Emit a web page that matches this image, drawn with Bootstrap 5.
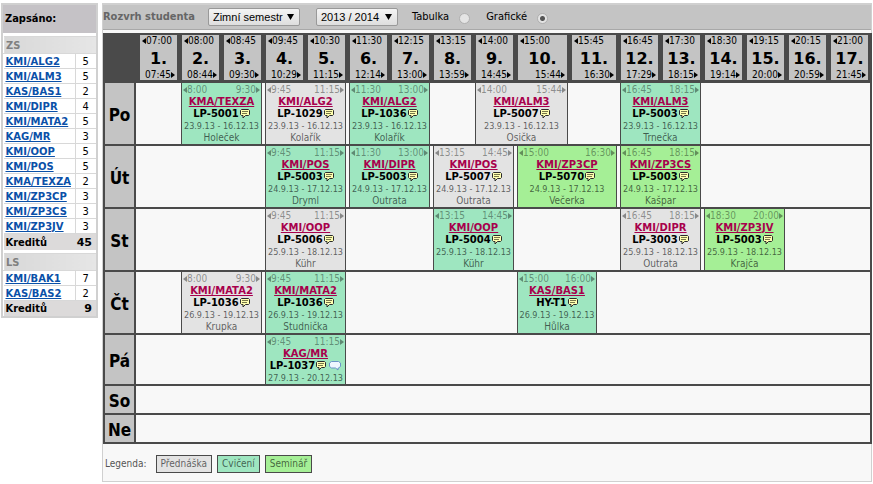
<!DOCTYPE html>
<html lang="cs">
<head>
<meta charset="utf-8">
<meta name="viewport" content="width=device-width, initial-scale=1">
<title>Rozvrh studenta</title>
<link href="https://cdn.jsdelivr.net/npm/bootstrap@5.3.0/dist/css/bootstrap.min.css" rel="stylesheet">
<style>
:root { --line: #4a4a4a; --head: #c4c4c4; --lecture: #e3e3e3; --exercise: #9ee6c0; --seminar: #a5ef96; }
body { font: 11px/12px "DejaVu Sans Condensed", "DejaVu Sans", sans-serif; color: #000; background: #fff; padding: 3px 1px 0 1px; }
.page-cols { gap: 4px; }

.enrolled { flex: 0 0 97px; border: 2px solid #d0d0d0; }
.enrolled h2 { font-size: 11px; line-height: 28px; font-weight: 700; margin: 0 0 3px; padding-left: 2px; background: #c5c2c6; }
.credits { width: 100%; border-top: 1px solid #d8d8d8; table-layout: fixed; }
.credits + .credits { margin-top: 3px; }
.credits col:last-child { width: 21px; }
.credits td, .credits th { padding: 1px 0 0 2px; height: 15px; line-height: 13px; border-bottom: 1px solid #d8d8d8; vertical-align: middle; }
.credits td + td { border-left: 1px solid #d8d8d8; padding: 1px 0 0; text-align: center; }
.credits thead th { height: 17px; color: #808080; background: linear-gradient(90deg, #d8d8d8, #e6e6e6); border-left: 1px solid #fff; padding-left: 2px; }
.credits tfoot th, .credits tfoot td { height: 16px; border: 0; background: #dcdada; font-weight: 700; }
.credits tfoot th + td { padding: 1px 4px 0 0; text-align: right; font-size: 11px; font-family: "DejaVu Sans", sans-serif; white-space: nowrap; }
.credits a { color: #0a50a8; font: 700 10px/13px "DejaVu Sans", sans-serif; text-decoration: underline; }

.schedule { border: 1px solid #d0d0d0; border-width: 2px 1px 1px; background: #f8f8f8; min-width: 0; }
.toolbar { height: 25px; background: var(--head); border-bottom: 1px solid #a8a8a8; margin-bottom: 3px; }
.toolbar h1 { font-size: 11px; line-height: 24px; font-weight: 700; color: #666; margin: 0 13px 0 0; }
.picker { appearance: none; height: 18px; width: 92px; margin-right: 16px; padding: 0 0 0 4px; border: 1px solid #999; border-radius: 2px; color: #000;
  font: 11px/14px "Liberation Sans", Arial, sans-serif;
  background: url("data:image/svg+xml,%3Csvg xmlns='http://www.w3.org/2000/svg' width='7' height='6'%3E%3Cpath d='M0 0h7L3.5 6z'/%3E%3C/svg%3E") no-repeat right 5px center, linear-gradient(#f4f4f4, #dedede); }
.picker-year { width: 82px; margin-right: 14px; }
.mode { appearance: none; width: 11px; height: 11px; margin: 2px 16px 0 10px; border: 1px solid #b0b0b0; border-radius: 50%; background: #e4e4e4; }
.mode:checked { background: radial-gradient(circle, #555 0 2px, #e4e4e4 3px); }

.timetable { width: 100%; table-layout: fixed; border: 2px solid var(--line); border-collapse: separate; border-spacing: 0; }
.timetable th, .timetable td { padding: 0; }
.timetable thead th { background: var(--line); padding: 0 4px 3px 1px; }
.timetable thead th:nth-child(2) { padding-left: 4px; }
.timetable thead th:last-child { padding-right: 2px; }
.hour { background: var(--head); font-weight: 400; height: 45px; }
.hour strong { font: 700 16px/23px "DejaVu Sans", sans-serif; text-align: center; }
.hour strong, .hour span { display: block; }
.from::before, .till::after { content: ""; display: inline-block; border: 3px solid transparent; }
.from::before { border-left-width: 0; border-right: 4px solid; }
.till::after { border-right-width: 0; border-left: 4px solid; }
.hour .from { text-align: left; padding-left: 2px; }
.hour .till { text-align: right; padding-right: 2px; line-height: 10px; }
.hour .from, .hour .till, .times { font-size: 10px; }
.c-day { width: 31px; } .c-1 { width: 45px; } .c-n { width: 42px; } .c-10 { width: 54px; } .c-11 { width: 49px; } .c-17 { width: 40px; }
.timetable tbody th { font-size: 17px; text-align: center; vertical-align: middle; background: var(--head); border-right: 2px solid var(--line); }
.timetable tbody tr > * { height: 63px; border-bottom: 2px solid var(--line); vertical-align: middle; }
.timetable tbody tr > th { padding-top: 2px; }
.timetable tbody tr.short > * { height: 51px; }
.timetable tbody tr.free > * { height: 29px; }
.timetable tbody tr:last-child > * { height: 27px; border-bottom: 0; }
.course { margin-right: 3px; border: 1px solid var(--line); border-width: 0 1px; height: 61px; padding-top: 1px; text-align: center; white-space: nowrap; color: rgba(0, 0, 0, .6); }
.short .course { height: 49px; }
.partial { margin-right: 23px; }
.times { display: flex; justify-content: space-between; padding: 0 1px; color: rgba(0, 0, 0, .4); }
.course a { display: block; color: #a8004c; font: 700 10px/12px "DejaVu Sans", sans-serif; }
.course b { display: flex; justify-content: center; align-items: center; color: #000; font: 700 10px/12px "DejaVu Sans", sans-serif; }
.course i { display: block; font-style: normal; font-size: 10px; }
.course b + i { font-size: 9px; }
.note { width: 10px; height: 10px; flex: none; margin-left: 1px; }
.chat { width: 12px; height: 10px; flex: none; margin-left: 3px; }
.lecture { background: var(--lecture); } .exercise { background: var(--exercise); } .seminar { background: var(--seminar); }

.legend { padding: 11px 2px 8px; gap: 5px; color: #555; font-size: 10px; }
.legend span { margin-right: 4px; }
.legend b { font-weight: 400; border: 1px solid var(--line); padding: 1px 4px; line-height: 14px; color: rgba(0, 0, 0, .6); }
</style>
<script src="https://cdn.jsdelivr.net/npm/bootstrap@5.3.0/dist/js/bootstrap.bundle.min.js"></script>
</head>
<body>
<svg class="d-none">
  <symbol id="note" viewBox="0 0 10 10"><path d="M.5 1.500l1-1h7l1 1v4l-1 1H5.500L3 9V6.500H1.500l-1-1z" fill="#ffffb0" stroke="#2a2a2a"/><path d="M2 2.500h6M2 4.500h5" stroke="#77774a"/></symbol>
  <symbol id="chat" viewBox="0 0 12 10"><path d="M2.500.5h7l2 1.500v3.500l-2 1.500H9V9L6.500 7h-4l-2-1.500V2z" fill="#eef6ff" stroke="#6b93c8"/></symbol>
</svg>
<div class="page-cols d-flex align-items-start">
  <aside class="enrolled">
    <h2>Zapsáno:</h2>
    <table class="credits">
      <colgroup><col><col></colgroup>
      <thead><tr><th colspan="2">ZS</th></tr></thead>
      <tbody>
        <tr><td><a href="#">KMI/ALG2</a></td><td>5</td></tr>
        <tr><td><a href="#">KMI/ALM3</a></td><td>5</td></tr>
        <tr><td><a href="#">KAS/BAS1</a></td><td>2</td></tr>
        <tr><td><a href="#">KMI/DIPR</a></td><td>4</td></tr>
        <tr><td><a href="#">KMI/MATA2</a></td><td>5</td></tr>
        <tr><td><a href="#">KAG/MR</a></td><td>3</td></tr>
        <tr><td><a href="#">KMI/OOP</a></td><td>5</td></tr>
        <tr><td><a href="#">KMI/POS</a></td><td>5</td></tr>
        <tr><td><a href="#">KMA/TEXZA</a></td><td>2</td></tr>
        <tr><td><a href="#">KMI/ZP3CP</a></td><td>3</td></tr>
        <tr><td><a href="#">KMI/ZP3CS</a></td><td>3</td></tr>
        <tr><td><a href="#">KMI/ZP3JV</a></td><td>3</td></tr>
      </tbody>
      <tfoot><tr><th>Kreditů</th><td>45</td></tr></tfoot>
    </table>
    <table class="credits">
      <colgroup><col><col></colgroup>
      <thead><tr><th colspan="2">LS</th></tr></thead>
      <tbody>
        <tr><td><a href="#">KMI/BAK1</a></td><td>7</td></tr>
        <tr><td><a href="#">KAS/BAS2</a></td><td>2</td></tr>
      </tbody>
      <tfoot><tr><th>Kreditů</th><td>9</td></tr></tfoot>
    </table>
  </aside>

  <main class="schedule flex-grow-1">
    <form class="toolbar d-flex align-items-center">
      <h1>Rozvrh studenta</h1>
      <select class="picker" aria-label="Semestr"><option>Zimní semestr</option></select>
      <select class="picker picker-year" aria-label="Akademický rok"><option>2013 / 2014</option></select>
      <label for="mode-table">Tabulka</label><input class="mode" type="radio" name="mode" id="mode-table">
      <label for="mode-graph">Grafické</label><input class="mode" type="radio" name="mode" id="mode-graph" checked>
    </form>

    <table class="timetable">
      <colgroup><col class="c-day"><col class="c-1"><col class="c-n" span="8"><col class="c-10"><col class="c-11"><col class="c-n" span="5"><col class="c-17"></colgroup>
      <thead>
        <tr>
          <th></th>
          <th><div class="hour"><span class="from">07:00</span><strong>1.</strong><span class="till">07:45</span></div></th>
          <th><div class="hour"><span class="from">08:00</span><strong>2.</strong><span class="till">08:44</span></div></th>
          <th><div class="hour"><span class="from">08:45</span><strong>3.</strong><span class="till">09:30</span></div></th>
          <th><div class="hour"><span class="from">09:45</span><strong>4.</strong><span class="till">10:29</span></div></th>
          <th><div class="hour"><span class="from">10:30</span><strong>5.</strong><span class="till">11:15</span></div></th>
          <th><div class="hour"><span class="from">11:30</span><strong>6.</strong><span class="till">12:14</span></div></th>
          <th><div class="hour"><span class="from">12:15</span><strong>7.</strong><span class="till">13:00</span></div></th>
          <th><div class="hour"><span class="from">13:15</span><strong>8.</strong><span class="till">13:59</span></div></th>
          <th><div class="hour"><span class="from">14:00</span><strong>9.</strong><span class="till">14:45</span></div></th>
          <th><div class="hour"><span class="from">15:00</span><strong>10.</strong><span class="till">15:44</span></div></th>
          <th><div class="hour"><span class="from">15:45</span><strong>11.</strong><span class="till">16:30</span></div></th>
          <th><div class="hour"><span class="from">16:45</span><strong>12.</strong><span class="till">17:29</span></div></th>
          <th><div class="hour"><span class="from">17:30</span><strong>13.</strong><span class="till">18:15</span></div></th>
          <th><div class="hour"><span class="from">18:30</span><strong>14.</strong><span class="till">19:14</span></div></th>
          <th><div class="hour"><span class="from">19:15</span><strong>15.</strong><span class="till">20:00</span></div></th>
          <th><div class="hour"><span class="from">20:15</span><strong>16.</strong><span class="till">20:59</span></div></th>
          <th><div class="hour"><span class="from">21:00</span><strong>17.</strong><span class="till">21:45</span></div></th>
        </tr>
      </thead>
      <tbody>
        <tr>
          <th>Po</th>
          <td></td>
          <td colspan="2"><div class="course exercise"><div class="times"><span class="from">8:00</span><span class="till">9:30</span></div><a href="#">KMA/TEXZA</a><b>LP-5001<svg class="note"><use href="#note"/></svg></b><i>23.9.13 - 16.12.13</i><i>Holeček</i></div></td>
          <td colspan="2"><div class="course lecture"><div class="times"><span class="from">9:45</span><span class="till">11:15</span></div><a href="#">KMI/ALG2</a><b>LP-1029<svg class="note"><use href="#note"/></svg></b><i>23.9.13 - 16.12.13</i><i>Kolařík</i></div></td>
          <td colspan="2"><div class="course exercise"><div class="times"><span class="from">11:30</span><span class="till">13:00</span></div><a href="#">KMI/ALG2</a><b>LP-1036<svg class="note"><use href="#note"/></svg></b><i>23.9.13 - 16.12.13</i><i>Kolařík</i></div></td>
          <td></td>
          <td colspan="2"><div class="course lecture"><div class="times"><span class="from">14:00</span><span class="till">15:44</span></div><a href="#">KMI/ALM3</a><b>LP-5007<svg class="note"><use href="#note"/></svg></b><i>23.9.13 - 16.12.13</i><i>Osička</i></div></td>
          <td></td>
          <td colspan="2"><div class="course exercise"><div class="times"><span class="from">16:45</span><span class="till">18:15</span></div><a href="#">KMI/ALM3</a><b>LP-5003<svg class="note"><use href="#note"/></svg></b><i>23.9.13 - 16.12.13</i><i>Trnečka</i></div></td>
          <td colspan="4"></td>
        </tr>
        <tr>
          <th>Út</th>
          <td colspan="3"></td>
          <td colspan="2"><div class="course exercise"><div class="times"><span class="from">9:45</span><span class="till">11:15</span></div><a href="#">KMI/POS</a><b>LP-5003<svg class="note"><use href="#note"/></svg></b><i>24.9.13 - 17.12.13</i><i>Dryml</i></div></td>
          <td colspan="2"><div class="course exercise"><div class="times"><span class="from">11:30</span><span class="till">13:00</span></div><a href="#">KMI/DIPR</a><b>LP-5003<svg class="note"><use href="#note"/></svg></b><i>24.9.13 - 17.12.13</i><i>Outrata</i></div></td>
          <td colspan="2"><div class="course lecture"><div class="times"><span class="from">13:15</span><span class="till">14:45</span></div><a href="#">KMI/POS</a><b>LP-5007<svg class="note"><use href="#note"/></svg></b><i>24.9.13 - 17.12.13</i><i>Outrata</i></div></td>
          <td colspan="2"><div class="course seminar"><div class="times"><span class="from">15:00</span><span class="till">16:30</span></div><a href="#">KMI/ZP3CP</a><b>LP-5070<svg class="note"><use href="#note"/></svg></b><i>24.9.13 - 17.12.13</i><i>Večerka</i></div></td>
          <td colspan="2"><div class="course seminar"><div class="times"><span class="from">16:45</span><span class="till">18:15</span></div><a href="#">KMI/ZP3CS</a><b>LP-5003<svg class="note"><use href="#note"/></svg></b><i>24.9.13 - 17.12.13</i><i>Kašpar</i></div></td>
          <td colspan="4"></td>
        </tr>
        <tr>
          <th>St</th>
          <td colspan="3"></td>
          <td colspan="2"><div class="course lecture"><div class="times"><span class="from">9:45</span><span class="till">11:15</span></div><a href="#">KMI/OOP</a><b>LP-5006<svg class="note"><use href="#note"/></svg></b><i>25.9.13 - 18.12.13</i><i>Kühr</i></div></td>
          <td colspan="2"></td>
          <td colspan="2"><div class="course exercise"><div class="times"><span class="from">13:15</span><span class="till">14:45</span></div><a href="#">KMI/OOP</a><b>LP-5004<svg class="note"><use href="#note"/></svg></b><i>25.9.13 - 18.12.13</i><i>Kühr</i></div></td>
          <td colspan="2"></td>
          <td colspan="2"><div class="course lecture"><div class="times"><span class="from">16:45</span><span class="till">18:15</span></div><a href="#">KMI/DIPR</a><b>LP-3003<svg class="note"><use href="#note"/></svg></b><i>25.9.13 - 18.12.13</i><i>Outrata</i></div></td>
          <td colspan="2"><div class="course seminar"><div class="times"><span class="from">18:30</span><span class="till">20:00</span></div><a href="#">KMI/ZP3JV</a><b>LP-5003<svg class="note"><use href="#note"/></svg></b><i>25.9.13 - 18.12.13</i><i>Krajča</i></div></td>
          <td colspan="2"></td>
        </tr>
        <tr>
          <th>Čt</th>
          <td></td>
          <td colspan="2"><div class="course lecture"><div class="times"><span class="from">8:00</span><span class="till">9:30</span></div><a href="#">KMI/MATA2</a><b>LP-1036<svg class="note"><use href="#note"/></svg></b><i>26.9.13 - 19.12.13</i><i>Krupka</i></div></td>
          <td colspan="2"><div class="course exercise"><div class="times"><span class="from">9:45</span><span class="till">11:15</span></div><a href="#">KMI/MATA2</a><b>LP-1036<svg class="note"><use href="#note"/></svg></b><i>26.9.13 - 19.12.13</i><i>Studnička</i></div></td>
          <td colspan="4"></td>
          <td colspan="2"><div class="course exercise partial"><div class="times"><span class="from">15:00</span><span class="till">16:00</span></div><a href="#">KAS/BAS1</a><b>HY-T1<svg class="note"><use href="#note"/></svg></b><i>26.9.13 - 19.12.13</i><i>Hůlka</i></div></td>
          <td colspan="6"></td>
        </tr>
        <tr class="short">
          <th>Pá</th>
          <td colspan="3"></td>
          <td colspan="2"><div class="course exercise"><div class="times"><span class="from">9:45</span><span class="till">11:15</span></div><a href="#">KAG/MR</a><b>LP-1037<svg class="note"><use href="#note"/></svg><svg class="chat"><use href="#chat"/></svg></b><i>27.9.13 - 20.12.13</i></div></td>
          <td colspan="12"></td>
        </tr>
        <tr class="free"><th>So</th><td colspan="17"></td></tr>
        <tr class="free"><th>Ne</th><td colspan="17"></td></tr>
      </tbody>
    </table>

    <div class="legend d-flex align-items-center">
      <span>Legenda:</span>
      <b class="lecture">Přednáška</b>
      <b class="exercise">Cvičení</b>
      <b class="seminar">Seminář</b>
    </div>
  </main>
</div>
</body>
</html>
